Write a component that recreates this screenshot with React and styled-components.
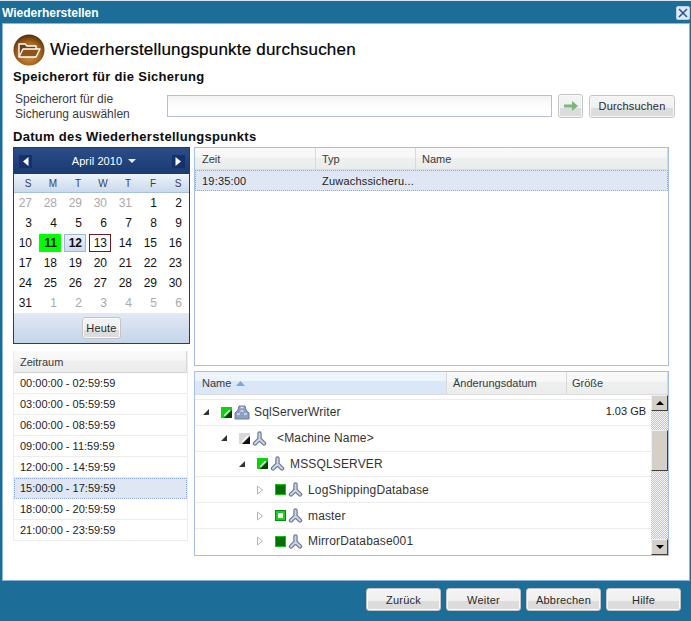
import React from "react";
import styled, { createGlobalStyle } from "styled-components";

const GlobalStyle = createGlobalStyle`
  html, body {
    margin: 0;
    padding: 0;
    background: #1c6d97;
  }
  * {
    box-sizing: border-box;
  }
`;

const Dialog = styled.div`
  width: 691px;
  height: 621px;
  background: #1c6d97;
  display: flex;
  flex-direction: column;
  font-family: "Liberation Sans", Arial, sans-serif;
  font-size: 11px;
  color: #222;
  overflow: hidden;
`;

const TitleBar = styled.div`
  height: 23px;
  padding: 1px 1px 0 2px;
  border-top: 1px solid #dbe7ee;
  display: flex;
  align-items: center;
  justify-content: space-between;
  color: #fff;
  font-size: 12px;
  font-weight: bold;
`;

const CloseButton = styled.div`
  width: 14px;
  height: 14px;
  display: flex;
  align-items: center;
  justify-content: center;
  background: #dfe9f6;
  border: 1px solid #b9cee6;
  border-radius: 2px;
`;

const Panel = styled.div`
  margin: 0 1px 0 2px;
  height: 558px;
  background: #fff;
  border: 1px solid #8db2dc;
  padding: 10px 14px 0 10px;
  display: flex;
  flex-direction: column;
`;

const Heading = styled.div`
  height: 32px;
  display: flex;
  align-items: center;
  gap: 5px;
  font-size: 17px;
  letter-spacing: 0.2px;
  color: #000;
  -webkit-text-stroke: 0.2px #000;
`;

const SectionTitle = styled.div`
  height: 15px;
  margin-top: ${(props) => props.$top}px;
  font-size: 13px;
  line-height: 15px;
  font-weight: bold;
  color: #0c0c0c;
  letter-spacing: 0.3px;
`;

const LocationRow = styled.div`
  margin-top: 10px;
  height: 24px;
  padding-left: 2px;
  display: flex;
  align-items: center;
`;

const LocationLabel = styled.div`
  width: 152px;
  padding-top: 1px;
  font-size: 12px;
  line-height: 15px;
  color: #3a3a3a;
`;

const LocationInput = styled.div`
  width: 385px;
  height: 22px;
  margin-bottom: 1px;
  border: 1px solid #b3bdd6;
  background: linear-gradient(#f1f3f4 0, #fbfbfb 8px, #fff 14px);
`;

const Button = styled.div`
  width: ${(props) => props.$w}px;
  height: ${(props) => props.$h || 23}px;
  margin-left: ${(props) => props.$left || 0}px;
  display: flex;
  align-items: center;
  justify-content: center;
  border: 1px solid #c4c4c4;
  border-radius: 3px;
  box-shadow: inset 0 0 0 1px #f8f8f8;
  background: linear-gradient(#f4f4f4 0, #efefef 58%, #dcdcdc 59%, #dcdcdc 100%);
  font-size: 11px;
  color: #2a2a2a;
  letter-spacing: 0.2px;
`;

const MainRow = styled.div`
  margin-top: 3px;
  width: 656px;
  display: flex;
  gap: 4px;
  align-items: flex-start;
`;

const LeftColumn = styled.div`
  width: 177px;
  display: flex;
  flex-direction: column;
  gap: 7px;
`;

const RightColumn = styled.div`
  width: 475px;
  display: flex;
  flex-direction: column;
  gap: 5px;
`;

const Calendar = styled.div`
  width: 177px;
  height: 197px;
  border: 1px solid #1d3d73;
  display: flex;
  flex-direction: column;
`;

const CalendarHeader = styled.div`
  height: 26px;
  padding: 0 4px 0 5px;
  display: flex;
  align-items: center;
  justify-content: space-between;
  background: linear-gradient(#2b4c86, #1a3a72);
  color: #fff;
  font-size: 11px;
`;

const MonthLabel = styled.div`
  padding-left: 4px;
  display: flex;
  align-items: center;
  gap: 6px;
  letter-spacing: 0.1px;
`;

const NavButton = styled.div`
  width: 13px;
  height: 13px;
  display: flex;
  align-items: center;
  justify-content: center;
  background: #14316a;
`;

const CaretDown = styled.span`
  width: 0;
  height: 0;
  border-left: 4px solid transparent;
  border-right: 4px solid transparent;
  border-top: 4px solid #e8eef8;
`;

const WeekRow = styled.div`
  height: 19px;
  display: grid;
  grid-template-columns: repeat(7, 25px);
  align-items: center;
  background: linear-gradient(#eef3fa, #c9d9ec);
  border-bottom: 1px solid #a9c0db;
  color: #33415c;
  font-size: 10px;
`;

const WeekDay = styled.div`
  padding-left: 3px;
  text-align: center;
`;

const DayGrid = styled.div`
  display: grid;
  grid-template-columns: repeat(7, 25px);
  grid-auto-rows: 20px;
  height: 120px;
`;

const Day = styled.div`
  width: 22px;
  height: 18px;
  margin-top: 1px;
  padding-right: 3px;
  border: 1px solid
    ${(props) =>
      props.$today
        ? "#6b1a1f"
        : props.$selected
          ? "#a2b6d4"
          : props.$marked
            ? "#0f0"
            : "transparent"};
  background: ${(props) =>
    props.$marked
      ? "#0f0"
      : props.$selected
        ? "linear-gradient(#e9eff9, #cfdcf0)"
        : "transparent"};
  color: ${(props) => (props.$muted ? "#a9a9a9" : "#111")};
  font-weight: ${(props) =>
    props.$marked || props.$selected ? "bold" : "normal"};
  font-size: 12px;
  line-height: 16px;
  text-align: right;
`;

const CalendarFooter = styled.div`
  flex: 1;
  padding-top: 4px;
  display: flex;
  justify-content: center;
  background: linear-gradient(#e1e9f4, #c5d5ea);
`;

const PeriodList = styled.div`
  width: 175px;
  border-left: 1px solid #ececec;
  border-right: 1px solid #ececec;
`;

const HeaderCell = styled.div`
  width: ${(props) => props.$w}px;
  height: 100%;
  padding-left: ${(props) => props.$pad || 7}px;
  display: flex;
  align-items: center;
  gap: 5px;
  border-right: 1px solid #d9d9d9;
  background: ${(props) =>
    props.$sorted
      ? "linear-gradient(#eef4fc 0, #eef4fc 40%, #d9e7f8 41%, #d9e7f8 100%)"
      : "linear-gradient(#f9f9f9 0, #f7f7f7 45%, #eeefef 46%, #ebecec 100%)"};
  font-size: 11px;
  color: #3a3a3a;
`;

const PeriodHeader = styled.div`
  height: 22px;
  border-bottom: 1px solid #d0d0d0;
`;

const PeriodRow = styled.div`
  height: 21px;
  padding-left: 6px;
  display: flex;
  align-items: center;
  border-bottom: 1px solid #ececec;
  background: ${(props) => (props.$active ? "#dfe7f5" : "#fff")};
  outline: ${(props) => (props.$active ? "1px dotted #8ea8d6" : "none")};
  outline-offset: -1px;
  font-size: 11px;
  color: #222;
`;

const Table = styled.div`
  width: 475px;
  height: ${(props) => props.$h}px;
  border: 1px solid #a5c0e6;
  display: flex;
  flex-direction: column;
`;

const TableHead = styled.div`
  height: ${(props) => props.$h}px;
  flex: none;
  display: flex;
  border-bottom: 1px solid #dcdcdc;
`;

const SelectedRow = styled.div`
  height: 21px;
  display: flex;
  align-items: center;
  background: #dfe7f5;
  outline: 1px dotted #8ea8d6;
  outline-offset: -1px;
  font-size: 11px;
`;

const RowCell = styled.div`
  width: ${(props) => props.$w}px;
  padding-left: ${(props) => props.$pad || 7}px;
  letter-spacing: 0.2px;
`;

const TreeBody = styled.div`
  flex: 1;
  display: flex;
  min-height: 0;
`;

const TreeRows = styled.div`
  width: 457px;
  padding-top: 4px;
`;

const TreeRow = styled.div`
  height: 25.8px;
  display: flex;
  align-items: center;
  justify-content: space-between;
  padding-right: 5px;
  border-top: 1px solid #ececec;
`;

const TreeName = styled.div`
  width: 234px;
  padding-left: ${(props) => 7 + props.$depth * 18}px;
  display: flex;
  align-items: center;
  overflow: hidden;
  white-space: nowrap;
  font-size: 12px;
  letter-spacing: 0.15px;
  color: #333;
`;

const Expander = styled.span`
  width: 19px;
  flex: none;
  display: flex;
`;

const NodeIcon = styled.span`
  margin-left: 2px;
  display: flex;
`;

const NodeLabel = styled.span`
  margin-left: ${(props) => props.$gap}px;
`;

const SizeLabel = styled.div`
  font-size: 11px;
  color: #222;
  margin-top: -3px;
`;

const ScrollBar = styled.div`
  width: 17px;
  display: flex;
  flex-direction: column;
  background: repeating-conic-gradient(#c4c4c4 0 25%, #f6f6f6 0 50%) 0 0 / 2px
    2px;
`;

const ScrollArrow = styled.div`
  height: 16px;
  flex: none;
  display: flex;
  align-items: center;
  justify-content: center;
  background: #d4d0c8;
  border: 1px solid;
  border-color: #f2f0ec #404040 #404040 #f2f0ec;
`;

const ScrollThumb = styled.div`
  height: 41px;
  margin-top: 19px;
  flex: none;
  background: #d4d0c8;
  border: 1px solid;
  border-color: #f2f0ec #404040 #404040 #f2f0ec;
`;

const ScrollTrack = styled.div`
  flex: 1;
`;

const Footer = styled.div`
  flex: 1;
  padding: 7px 10px 0 0;
  display: flex;
  justify-content: flex-end;
  gap: 5px;
`;

const FolderBadge = () => (
  <svg width="32" height="32" viewBox="0 0 32 32">
    <defs>
      <radialGradient id="badge" cx="50%" cy="62%" r="60%">
        <stop offset="0" stopColor="#dca35a" />
        <stop offset="0.6" stopColor="#a9661f" />
        <stop offset="1" stopColor="#5b3208" />
      </radialGradient>
    </defs>
    <circle cx="16" cy="16" r="15.5" fill="url(#badge)" />
    <path d="M6 23V10h6l2 2h9v3" fill="#6d3f12" stroke="#fff" strokeWidth="1.4" />
    <path d="M6 23l4-8h17l-4 8z" fill="#8d5518" stroke="#fff" strokeWidth="1.4" strokeLinejoin="round" />
  </svg>
);

const Triangle = ({ dir, color = "#fff" }) => (
  <svg width="6" height="9" viewBox="0 0 6 9">
    <path d={dir === "left" ? "M5.5 0v9L0 4.5z" : "M.5 0v9L6 4.5z"} fill={color} />
  </svg>
);

const GoArrow = () => (
  <svg width="16" height="14" viewBox="0 0 16 14">
    <path d="M1 5.5h8V2l6 5-6 5V8.5H1z" fill="#79b77a" />
  </svg>
);

const SortArrow = () => (
  <svg width="9" height="5" viewBox="0 0 9 5">
    <path d="M4.5 0L9 5H0z" fill="#7ea3d6" />
  </svg>
);

const ExpandArrow = ({ open }) =>
  open ? (
    <svg width="8" height="8" viewBox="0 0 8 8">
      <path d="M7 1v6H1z" fill="#333" />
    </svg>
  ) : (
    <svg width="8" height="10" viewBox="0 0 8 10">
      <path d="M1.5 1l5 4-5 4z" fill="#fff" stroke="#b5b5b5" />
    </svg>
  );

const StateBox = ({ state }) => {
  if (state === "hollow") {
    return (
      <svg width="11" height="11" viewBox="0 0 11 11">
        <rect width="11" height="11" fill="#0a8a0a" />
        <rect x="1" y="1" width="9" height="9" fill="#18d018" />
        <rect x="3" y="3" width="5" height="5" fill="#fff" />
      </svg>
    );
  }
  if (state === "full") {
    return (
      <svg width="11" height="11" viewBox="0 0 11 11">
        <rect width="11" height="11" fill="#0fc40f" />
        <rect x="1" y="1" width="9" height="9" fill="#056e05" />
      </svg>
    );
  }
  const light = state === "grey" ? "#d8d8d8" : "#10d010";
  const dark = state === "grey" ? "#111" : "#063f06";
  return (
    <svg width="11" height="11" viewBox="0 0 11 11">
      <rect width="11" height="11" fill={light} />
      <path d="M11 3v8H3z" fill={dark} />
      <path d="M3 8l5-5h1v1L4 9H3z" fill="#fff" />
    </svg>
  );
};

const ComponentIcon = () => (
  <svg width="15" height="15" viewBox="0 0 15 15">
    <path d="M7.5 2.5v5.500M7.5 8L3 12.500M7.5 8l4.500 4.500" stroke="#6c7a98" strokeWidth="4.4" strokeLinecap="round" fill="none" />
    <path d="M7.5 2.5v5.500M7.5 8L3 12.500M7.5 8l4.500 4.500" stroke="#ccd3e2" strokeWidth="2" strokeLinecap="round" fill="none" />
  </svg>
);

const WriterIcon = () => (
  <svg width="16" height="16" viewBox="0 0 16 16">
    <path d="M5 2h6l1 4 3 3v6H1V9l3-3z" fill="#8f9fc0" stroke="#6a7ba0" />
    <path d="M6.5 3.5h3M3 10h3M10 10h3M6.500 7h3" stroke="#d9e0ee" strokeWidth="1.4" />
  </svg>
);

const CloseIcon = () => (
  <svg width="10" height="10" viewBox="0 0 10 10">
    <path d="M1 1l8 8M9 1l-8 8" stroke="#27508f" strokeWidth="1.5" />
  </svg>
);

const weekDays = ["S", "M", "T", "W", "T", "F", "S"];

const muted = (list) => list.map((d) => ({ d, muted: true }));

const calendarDays = [
  ...muted([27, 28, 29, 30, 31]),
  ...Array.from({ length: 31 }, (_, i) => ({ d: i + 1 })),
  ...muted([1, 2, 3, 4, 5, 6]),
];

const periods = [
  "00:00:00 - 02:59:59",
  "03:00:00 - 05:59:59",
  "06:00:00 - 08:59:59",
  "09:00:00 - 11:59:59",
  "12:00:00 - 14:59:59",
  "15:00:00 - 17:59:59",
  "18:00:00 - 20:59:59",
  "21:00:00 - 23:59:59",
];

const tree = [
  { depth: 0, open: true, state: "partial", name: "SqlServerWriter", writer: true, size: "1.03 GB", gap: 4 },
  { depth: 1, open: true, state: "grey", name: "<Machine Name>", gap: 10 },
  { depth: 2, open: true, state: "partial", name: "MSSQLSERVER", gap: 5 },
  { depth: 3, state: "full", name: "LogShippingDatabase", gap: 5 },
  { depth: 3, state: "hollow", name: "master", gap: 5 },
  { depth: 3, state: "full", name: "MirrorDatabase001", gap: 5 },
];

export default function App() {
  return (
    <Dialog>
      <GlobalStyle />
      <TitleBar>
        Wiederherstellen
        <CloseButton>
          <CloseIcon />
        </CloseButton>
      </TitleBar>
      <Panel>
        <Heading>
          <FolderBadge />
          Wiederherstellungspunkte durchsuchen
        </Heading>
        <SectionTitle $top={3}>Speicherort für die Sicherung</SectionTitle>
        <LocationRow>
          <LocationLabel>
            Speicherort für die
            <br />
            Sicherung auswählen
          </LocationLabel>
          <LocationInput />
          <Button $w={25} $h={24} $left={6}>
            <GoArrow />
          </Button>
          <Button $w={86} $h={23} $left={6}>
            Durchsuchen
          </Button>
        </LocationRow>
        <SectionTitle $top={11}>Datum des Wiederherstellungspunkts</SectionTitle>
        <MainRow>
          <LeftColumn>
            <Calendar>
              <CalendarHeader>
                <NavButton>
                  <Triangle dir="left" />
                </NavButton>
                <MonthLabel>
                  April 2010
                  <CaretDown />
                </MonthLabel>
                <NavButton>
                  <Triangle dir="right" />
                </NavButton>
              </CalendarHeader>
              <WeekRow>
                {weekDays.map((w, i) => (
                  <WeekDay key={i}>{w}</WeekDay>
                ))}
              </WeekRow>
              <DayGrid>
                {calendarDays.map((item, i) => (
                  <Day
                    key={i}
                    $muted={item.muted}
                    $marked={!item.muted && item.d === 11}
                    $selected={!item.muted && item.d === 12}
                    $today={!item.muted && item.d === 13}
                  >
                    {item.d}
                  </Day>
                ))}
              </DayGrid>
              <CalendarFooter>
                <Button $w={39} $h={22}>
                  Heute
                </Button>
              </CalendarFooter>
            </Calendar>
            <PeriodList>
              <PeriodHeader>
                <HeaderCell $w={173} $pad={6}>
                  Zeitraum
                </HeaderCell>
              </PeriodHeader>
              {periods.map((p, i) => (
                <PeriodRow key={p} $active={i === 5}>
                  {p}
                </PeriodRow>
              ))}
            </PeriodList>
          </LeftColumn>
          <RightColumn>
            <Table $h={219}>
              <TableHead $h={22}>
                <HeaderCell $w={121}>Zeit</HeaderCell>
                <HeaderCell $w={100} $pad={6}>
                  Typ
                </HeaderCell>
                <HeaderCell $w={252} $pad={6}>
                  Name
                </HeaderCell>
              </TableHead>
              <SelectedRow>
                <RowCell $w={121}>19:35:00</RowCell>
                <RowCell $w={100} $pad={6}>
                  Zuwachssicheru...
                </RowCell>
              </SelectedRow>
            </Table>
            <Table $h={185}>
              <TableHead $h={23}>
                <HeaderCell $w={252} $sorted>
                  Name
                  <SortArrow />
                </HeaderCell>
                <HeaderCell $w={120} $pad={6}>
                  Änderungsdatum
                </HeaderCell>
                <HeaderCell $w={101} $pad={5}>
                  Größe
                </HeaderCell>
              </TableHead>
              <TreeBody>
                <TreeRows>
                  {tree.map((node) => (
                    <TreeRow key={node.name}>
                      <TreeName $depth={node.depth}>
                        <Expander>
                          <ExpandArrow open={node.open} />
                        </Expander>
                        <StateBox state={node.state} />
                        <NodeIcon>
                          {node.writer ? <WriterIcon /> : <ComponentIcon />}
                        </NodeIcon>
                        <NodeLabel $gap={node.gap}>{node.name}</NodeLabel>
                      </TreeName>
                      {node.size && <SizeLabel>{node.size}</SizeLabel>}
                    </TreeRow>
                  ))}
                </TreeRows>
                <ScrollBar>
                  <ScrollArrow>
                    <svg width="8" height="4" viewBox="0 0 8 4">
                      <path d="M4 0l4 4H0z" fill="#000" />
                    </svg>
                  </ScrollArrow>
                  <ScrollThumb />
                  <ScrollTrack />
                  <ScrollArrow>
                    <svg width="8" height="4" viewBox="0 0 8 4">
                      <path d="M0 0h8L4 4z" fill="#000" />
                    </svg>
                  </ScrollArrow>
                </ScrollBar>
              </TreeBody>
            </Table>
          </RightColumn>
        </MainRow>
      </Panel>
      <Footer>
        <Button $w={75}>Zurück</Button>
        <Button $w={75}>Weiter</Button>
        <Button $w={75}>Abbrechen</Button>
        <Button $w={75}>Hilfe</Button>
      </Footer>
    </Dialog>
  );
}
